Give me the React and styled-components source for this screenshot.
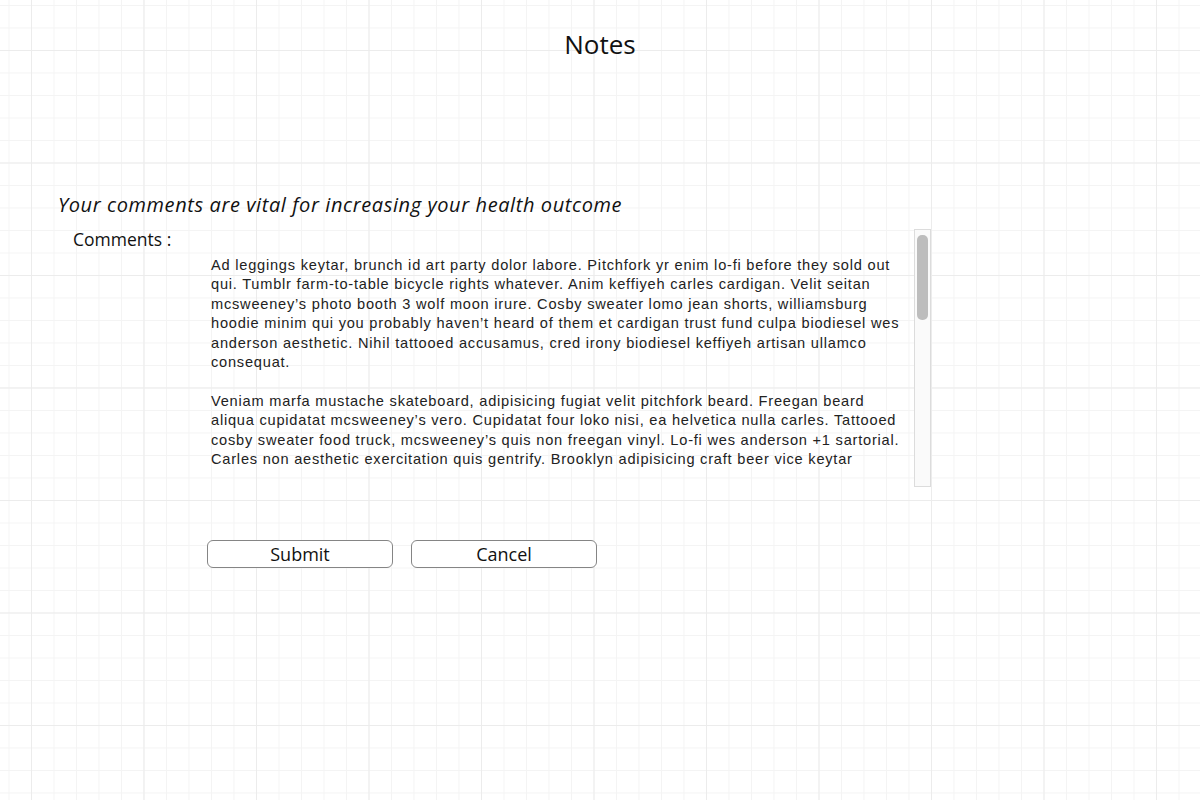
import React from "react";
import styled, { createGlobalStyle } from "styled-components";

const GlobalStyle = createGlobalStyle`
  html, body {
    margin: 0;
    padding: 0;
  }
  body {
    width: 1200px;
    height: 800px;
    overflow: hidden;
    background-color: #ffffff;
    background-image:
      linear-gradient(to right, #ececec 1px, transparent 1px),
      linear-gradient(to bottom, #ececec 1px, transparent 1px),
      linear-gradient(to right, #f4f4f4 1px, transparent 1px),
      linear-gradient(to bottom, #f4f4f4 1px, transparent 1px);
    background-size: 112.5px 112.5px, 112.5px 112.5px, 22.5px 22.5px, 22.5px 22.5px;
    background-position: 31px 0, 0 50px, 8.5px 0, 0 5px;
    font-family: "Open Sans", "Noto Sans", sans-serif;
    color: #111;
  }
`;

const Page = styled.main`
  display: flex;
  flex-direction: column;
  padding-top: 26px;
`;

const Title = styled.h1`
  margin: 0;
  text-align: center;
  font-family: "Open Sans", sans-serif;
  font-weight: 400;
  font-size: 26px;
  line-height: 36px;
  color: #111;
`;

const Form = styled.section`
  display: flex;
  flex-direction: column;
  margin-top: 129px;
  padding-left: 58px;
`;

const Lead = styled.p`
  margin: 0;
  font-family: "Open Sans", sans-serif;
  font-style: italic;
  font-size: 20px;
  letter-spacing: 0.6px;
  line-height: 28px;
  color: #111;
`;

const FieldRow = styled.div`
  display: grid;
  grid-template-columns: 142px 731px;
  margin-top: 10px;
`;

const Label = styled.label`
  padding-left: 15px;
  font-family: "Open Sans", sans-serif;
  font-size: 17.5px;
  line-height: 20px;
  color: #111;
`;

const TextBox = styled.div`
  display: flex;
  height: 258px;
`;

const TextContent = styled.div`
  flex: 1;
  overflow: hidden;
  padding: 27px 0 0 11px;
  font-family: "Liberation Sans", Arial, sans-serif;
  font-size: 14.6px;
  letter-spacing: 0.78px;
  line-height: 19.4px;
  white-space: nowrap;
  color: #222;
`;

const Para = styled.p`
  margin: 0 0 19.4px;
`;

const ScrollTrack = styled.div`
  width: 17px;
  flex: none;
  box-sizing: border-box;
  border: 1px solid #dcdcdc;
  background: #fafafa;
  padding: 5px 2px 0;
`;

const ScrollThumb = styled.div`
  height: 85px;
  border-radius: 5px;
  background: #bdbdbd;
`;

const Actions = styled.div`
  display: flex;
  gap: 18px;
  margin-top: 53px;
  padding-left: 149px;
`;

const Button = styled.button`
  width: 186px;
  height: 28px;
  box-sizing: border-box;
  border: 1.5px solid #858585;
  border-radius: 6px;
  background: #ffffff;
  font-family: "Open Sans", sans-serif;
  font-size: 18px;
  line-height: 24px;
  color: #111;
  padding: 0;
  cursor: pointer;
`;

const para1 = [
  "Ad leggings keytar, brunch id art party dolor labore. Pitchfork yr enim lo-fi before they sold out",
  "qui. Tumblr farm-to-table bicycle rights whatever. Anim keffiyeh carles cardigan. Velit seitan",
  "mcsweeney’s photo booth 3 wolf moon irure. Cosby sweater lomo jean shorts, williamsburg",
  "hoodie minim qui you probably haven’t heard of them et cardigan trust fund culpa biodiesel wes",
  "anderson aesthetic. Nihil tattooed accusamus, cred irony biodiesel keffiyeh artisan ullamco",
  "consequat.",
];

const para2 = [
  "Veniam marfa mustache skateboard, adipisicing fugiat velit pitchfork beard. Freegan beard",
  "aliqua cupidatat mcsweeney’s vero. Cupidatat four loko nisi, ea helvetica nulla carles. Tattooed",
  "cosby sweater food truck, mcsweeney’s quis non freegan vinyl. Lo-fi wes anderson +1 sartorial.",
  "Carles non aesthetic exercitation quis gentrify. Brooklyn adipisicing craft beer vice keytar",
];

function Lines({ lines }) {
  return lines.map((line, i) => (
    <React.Fragment key={i}>
      {line}
      {i < lines.length - 1 && <br />}
    </React.Fragment>
  ));
}

export default function App() {
  return (
    <>
      <GlobalStyle />
      <Page>
        <Title>Notes</Title>
        <Form>
          <Lead>Your comments are vital for increasing your health outcome</Lead>
          <FieldRow>
            <Label>Comments :</Label>
            <TextBox>
              <TextContent>
                <Para>
                  <Lines lines={para1} />
                </Para>
                <Para>
                  <Lines lines={para2} />
                </Para>
              </TextContent>
              <ScrollTrack>
                <ScrollThumb />
              </ScrollTrack>
            </TextBox>
          </FieldRow>
          <Actions>
            <Button>Submit</Button>
            <Button>Cancel</Button>
          </Actions>
        </Form>
      </Page>
    </>
  );
}
